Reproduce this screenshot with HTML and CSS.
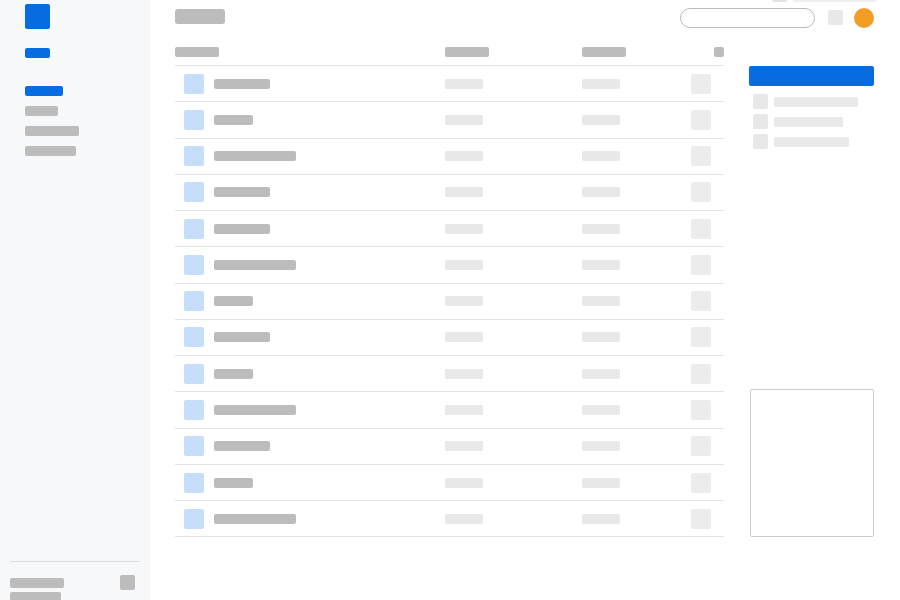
FILE: index.html
```html
<!DOCTYPE html>
<html lang="en">
<head>
<meta charset="utf-8">
<title>Files</title>
<link rel="stylesheet" href="styles.css">
</head>
<body>
<div class="app">
  <aside class="sidebar">
    <div class="logo"></div>
    <div class="brand"></div>
    <nav class="nav">
      <div class="nav-item active w38"></div>
      <div class="nav-item w33"></div>
      <div class="nav-item w54"></div>
      <div class="nav-item w51"></div>
    </nav>
    <div class="side-footer">
      <div class="foot-row">
        <div class="foot-bar w54"></div>
        <div class="foot-sq"></div>
      </div>
      <div class="foot-bar w51"></div>
    </div>
  </aside>
  <main class="main">
    <div class="peek">
      <div class="peek-sq"></div>
      <div class="peek-bar"></div>
    </div>
    <header class="topbar">
      <div class="title"></div>
      <div class="top-actions">
        <div class="search"></div>
        <div class="top-sq"></div>
        <div class="avatar"></div>
      </div>
    </header>
    <div class="content">
      <section class="table">
        <div class="thead">
          <div class="cell"><div class="hbar"></div></div>
          <div class="cell"><div class="hbar"></div></div>
          <div class="cell"><div class="hbar"></div></div>
          <div class="cell end"><div class="hsq"></div></div>
        </div>
        <div class="row"><div class="cell first"><div class="ico"></div><div class="name" style="width:56px"></div></div><div class="cell"><div class="lbar"></div></div><div class="cell"><div class="lbar"></div></div><div class="cell end"><div class="act"></div></div></div>
        <div class="row"><div class="cell first"><div class="ico"></div><div class="name" style="width:39px"></div></div><div class="cell"><div class="lbar"></div></div><div class="cell"><div class="lbar"></div></div><div class="cell end"><div class="act"></div></div></div>
        <div class="row"><div class="cell first"><div class="ico"></div><div class="name" style="width:82px"></div></div><div class="cell"><div class="lbar"></div></div><div class="cell"><div class="lbar"></div></div><div class="cell end"><div class="act"></div></div></div>
        <div class="row"><div class="cell first"><div class="ico"></div><div class="name" style="width:56px"></div></div><div class="cell"><div class="lbar"></div></div><div class="cell"><div class="lbar"></div></div><div class="cell end"><div class="act"></div></div></div>
        <div class="row"><div class="cell first"><div class="ico"></div><div class="name" style="width:56px"></div></div><div class="cell"><div class="lbar"></div></div><div class="cell"><div class="lbar"></div></div><div class="cell end"><div class="act"></div></div></div>
        <div class="row"><div class="cell first"><div class="ico"></div><div class="name" style="width:82px"></div></div><div class="cell"><div class="lbar"></div></div><div class="cell"><div class="lbar"></div></div><div class="cell end"><div class="act"></div></div></div>
        <div class="row"><div class="cell first"><div class="ico"></div><div class="name" style="width:39px"></div></div><div class="cell"><div class="lbar"></div></div><div class="cell"><div class="lbar"></div></div><div class="cell end"><div class="act"></div></div></div>
        <div class="row"><div class="cell first"><div class="ico"></div><div class="name" style="width:56px"></div></div><div class="cell"><div class="lbar"></div></div><div class="cell"><div class="lbar"></div></div><div class="cell end"><div class="act"></div></div></div>
        <div class="row"><div class="cell first"><div class="ico"></div><div class="name" style="width:39px"></div></div><div class="cell"><div class="lbar"></div></div><div class="cell"><div class="lbar"></div></div><div class="cell end"><div class="act"></div></div></div>
        <div class="row"><div class="cell first"><div class="ico"></div><div class="name" style="width:82px"></div></div><div class="cell"><div class="lbar"></div></div><div class="cell"><div class="lbar"></div></div><div class="cell end"><div class="act"></div></div></div>
        <div class="row"><div class="cell first"><div class="ico"></div><div class="name" style="width:56px"></div></div><div class="cell"><div class="lbar"></div></div><div class="cell"><div class="lbar"></div></div><div class="cell end"><div class="act"></div></div></div>
        <div class="row"><div class="cell first"><div class="ico"></div><div class="name" style="width:39px"></div></div><div class="cell"><div class="lbar"></div></div><div class="cell"><div class="lbar"></div></div><div class="cell end"><div class="act"></div></div></div>
        <div class="row"><div class="cell first"><div class="ico"></div><div class="name" style="width:82px"></div></div><div class="cell"><div class="lbar"></div></div><div class="cell"><div class="lbar"></div></div><div class="cell end"><div class="act"></div></div></div>
      </section>
      <aside class="panel">
        <div class="primary-btn"></div>
        <ul class="plist">
          <li class="pitem"><span class="psq"></span><span class="pbar" style="width:84px"></span></li>
          <li class="pitem"><span class="psq"></span><span class="pbar" style="width:69px"></span></li>
          <li class="pitem"><span class="psq"></span><span class="pbar" style="width:75px"></span></li>
        </ul>
        <div class="card"></div>
      </aside>
    </div>
  </main>
</div>
</body>
</html>
```
FILE: styles.css
```css
* { box-sizing: border-box; }
html, body { margin: 0; padding: 0; }
body {
  background: #ffffff;
  font-family: "Liberation Sans", Arial, sans-serif;
  overflow: hidden;
}
.app {
  display: flex;
  width: 900px;
  height: 600px;
  overflow: hidden;
}

/* Sidebar */
.sidebar {
  flex: 0 0 150px;
  width: 150px;
  height: 612px;
  background: #f7f8fa;
  display: flex;
  flex-direction: column;
  padding: 4px 10px 10px 10px;
}
.logo {
  width: 25px;
  height: 25px;
  margin-left: 15px;
  border-radius: 2px;
  background: #066ce0;
}
.brand {
  width: 25px;
  height: 10px;
  margin: 19px 0 0 15px;
  border-radius: 2px;
  background: #066ce0;
}
.nav {
  margin: 28px 0 0 15px;
  display: flex;
  flex-direction: column;
  gap: 10px;
}
.nav-item {
  height: 10px;
  border-radius: 2px;
  background: #bcbcbc;
}
.nav-item.active { background: #066ce0; }
.w33 { width: 33px; }
.w38 { width: 38px; }
.w51 { width: 51px; }
.w54 { width: 54px; }
.side-footer {
  margin-top: auto;
  border-top: 1px solid #dcdde0;
  padding-top: 13px;
  display: flex;
  flex-direction: column;
  gap: 2px;
}
.foot-row {
  display: flex;
  align-items: center;
  justify-content: space-between;
  padding-right: 5px;
}
.foot-bar {
  height: 10px;
  border-radius: 2px;
  background: #bcbcbc;
}
.foot-sq {
  width: 15px;
  height: 15px;
  border-radius: 2px;
  background: #bcbcbc;
}

/* Main */
.main {
  flex: 1;
  position: relative;
  padding: 0 26px 0 25px;
  display: flex;
  flex-direction: column;
}
.peek {
  position: absolute;
  top: -13px;
  right: 23px;
  display: flex;
  align-items: flex-end;
  gap: 6px;
}
.peek-sq {
  width: 15px;
  height: 15px;
  border-radius: 2px;
  background: #e4e4e4;
}
.peek-bar {
  width: 84px;
  height: 10px;
  border-radius: 2px;
  background: #efefef;
}
.topbar {
  height: 35px;
  display: flex;
  align-items: center;
  justify-content: space-between;
}
.title {
  width: 50px;
  height: 15px;
  margin-bottom: 2px;
  border-radius: 3px;
  background: #bcbcbc;
}
.top-actions {
  display: flex;
  align-items: center;
}
.search {
  width: 135px;
  height: 20px;
  border: 1px solid #b9b9b9;
  border-radius: 10px;
  background: #fff;
}
.top-sq {
  width: 15px;
  height: 15px;
  margin-left: 13px;
  border-radius: 2px;
  background: #e8e8e8;
}
.avatar {
  width: 20px;
  height: 20px;
  margin-left: 11px;
  border-radius: 50%;
  background: #f19d26;
}

.content {
  display: flex;
  gap: 25px;
  align-items: stretch;
}

/* Table */
.table {
  flex: 0 0 549px;
  width: 549px;
  display: flex;
  flex-direction: column;
}
.thead, .row {
  display: grid;
  grid-template-columns: 270px 136.5px 1fr 40px;
  align-items: center;
  border-bottom: 1px solid #e3e3e3;
}
.thead {
  padding: 12px 0 8px;
}
.row {
  height: 36.27px;
}
.cell {
  display: flex;
  align-items: center;
}
.cell.end { justify-content: flex-end; }
.cell.first { padding-left: 9px; }
.hbar {
  width: 44px;
  height: 10px;
  border-radius: 2px;
  background: #bcbcbc;
}
.hsq {
  width: 10px;
  height: 10px;
  border-radius: 2px;
  background: #bcbcbc;
}
.ico {
  width: 20px;
  height: 20px;
  border-radius: 2px;
  background: #c6defa;
}
.name {
  height: 10px;
  margin-left: 10px;
  border-radius: 2px;
  background: #bcbcbc;
}
.lbar {
  width: 38px;
  height: 10px;
  border-radius: 2px;
  background: #e8e8e8;
}
.act {
  width: 20px;
  height: 20px;
  margin-right: 13px;
  border-radius: 2px;
  background: #ececec;
}

/* Right panel */
.panel {
  flex: 0 0 125px;
  width: 125px;
  display: flex;
  flex-direction: column;
  padding-top: 31px;
}
.primary-btn {
  height: 20px;
  border-radius: 2px;
  background: #066ce0;
}
.plist {
  list-style: none;
  margin: 8px 0 0;
  padding: 0 0 0 4px;
  display: flex;
  flex-direction: column;
  gap: 5px;
}
.pitem {
  display: flex;
  align-items: center;
  gap: 6px;
}
.psq {
  width: 15px;
  height: 15px;
  border-radius: 2px;
  background: #e8e8e8;
}
.pbar {
  height: 10px;
  border-radius: 2px;
  background: #e8e8e8;
}
.card {
  margin-top: auto;
  margin-left: 1px;
  height: 148px;
  border: 1px solid #cccccc;
  border-radius: 2px;
  background: #fff;
}
```
